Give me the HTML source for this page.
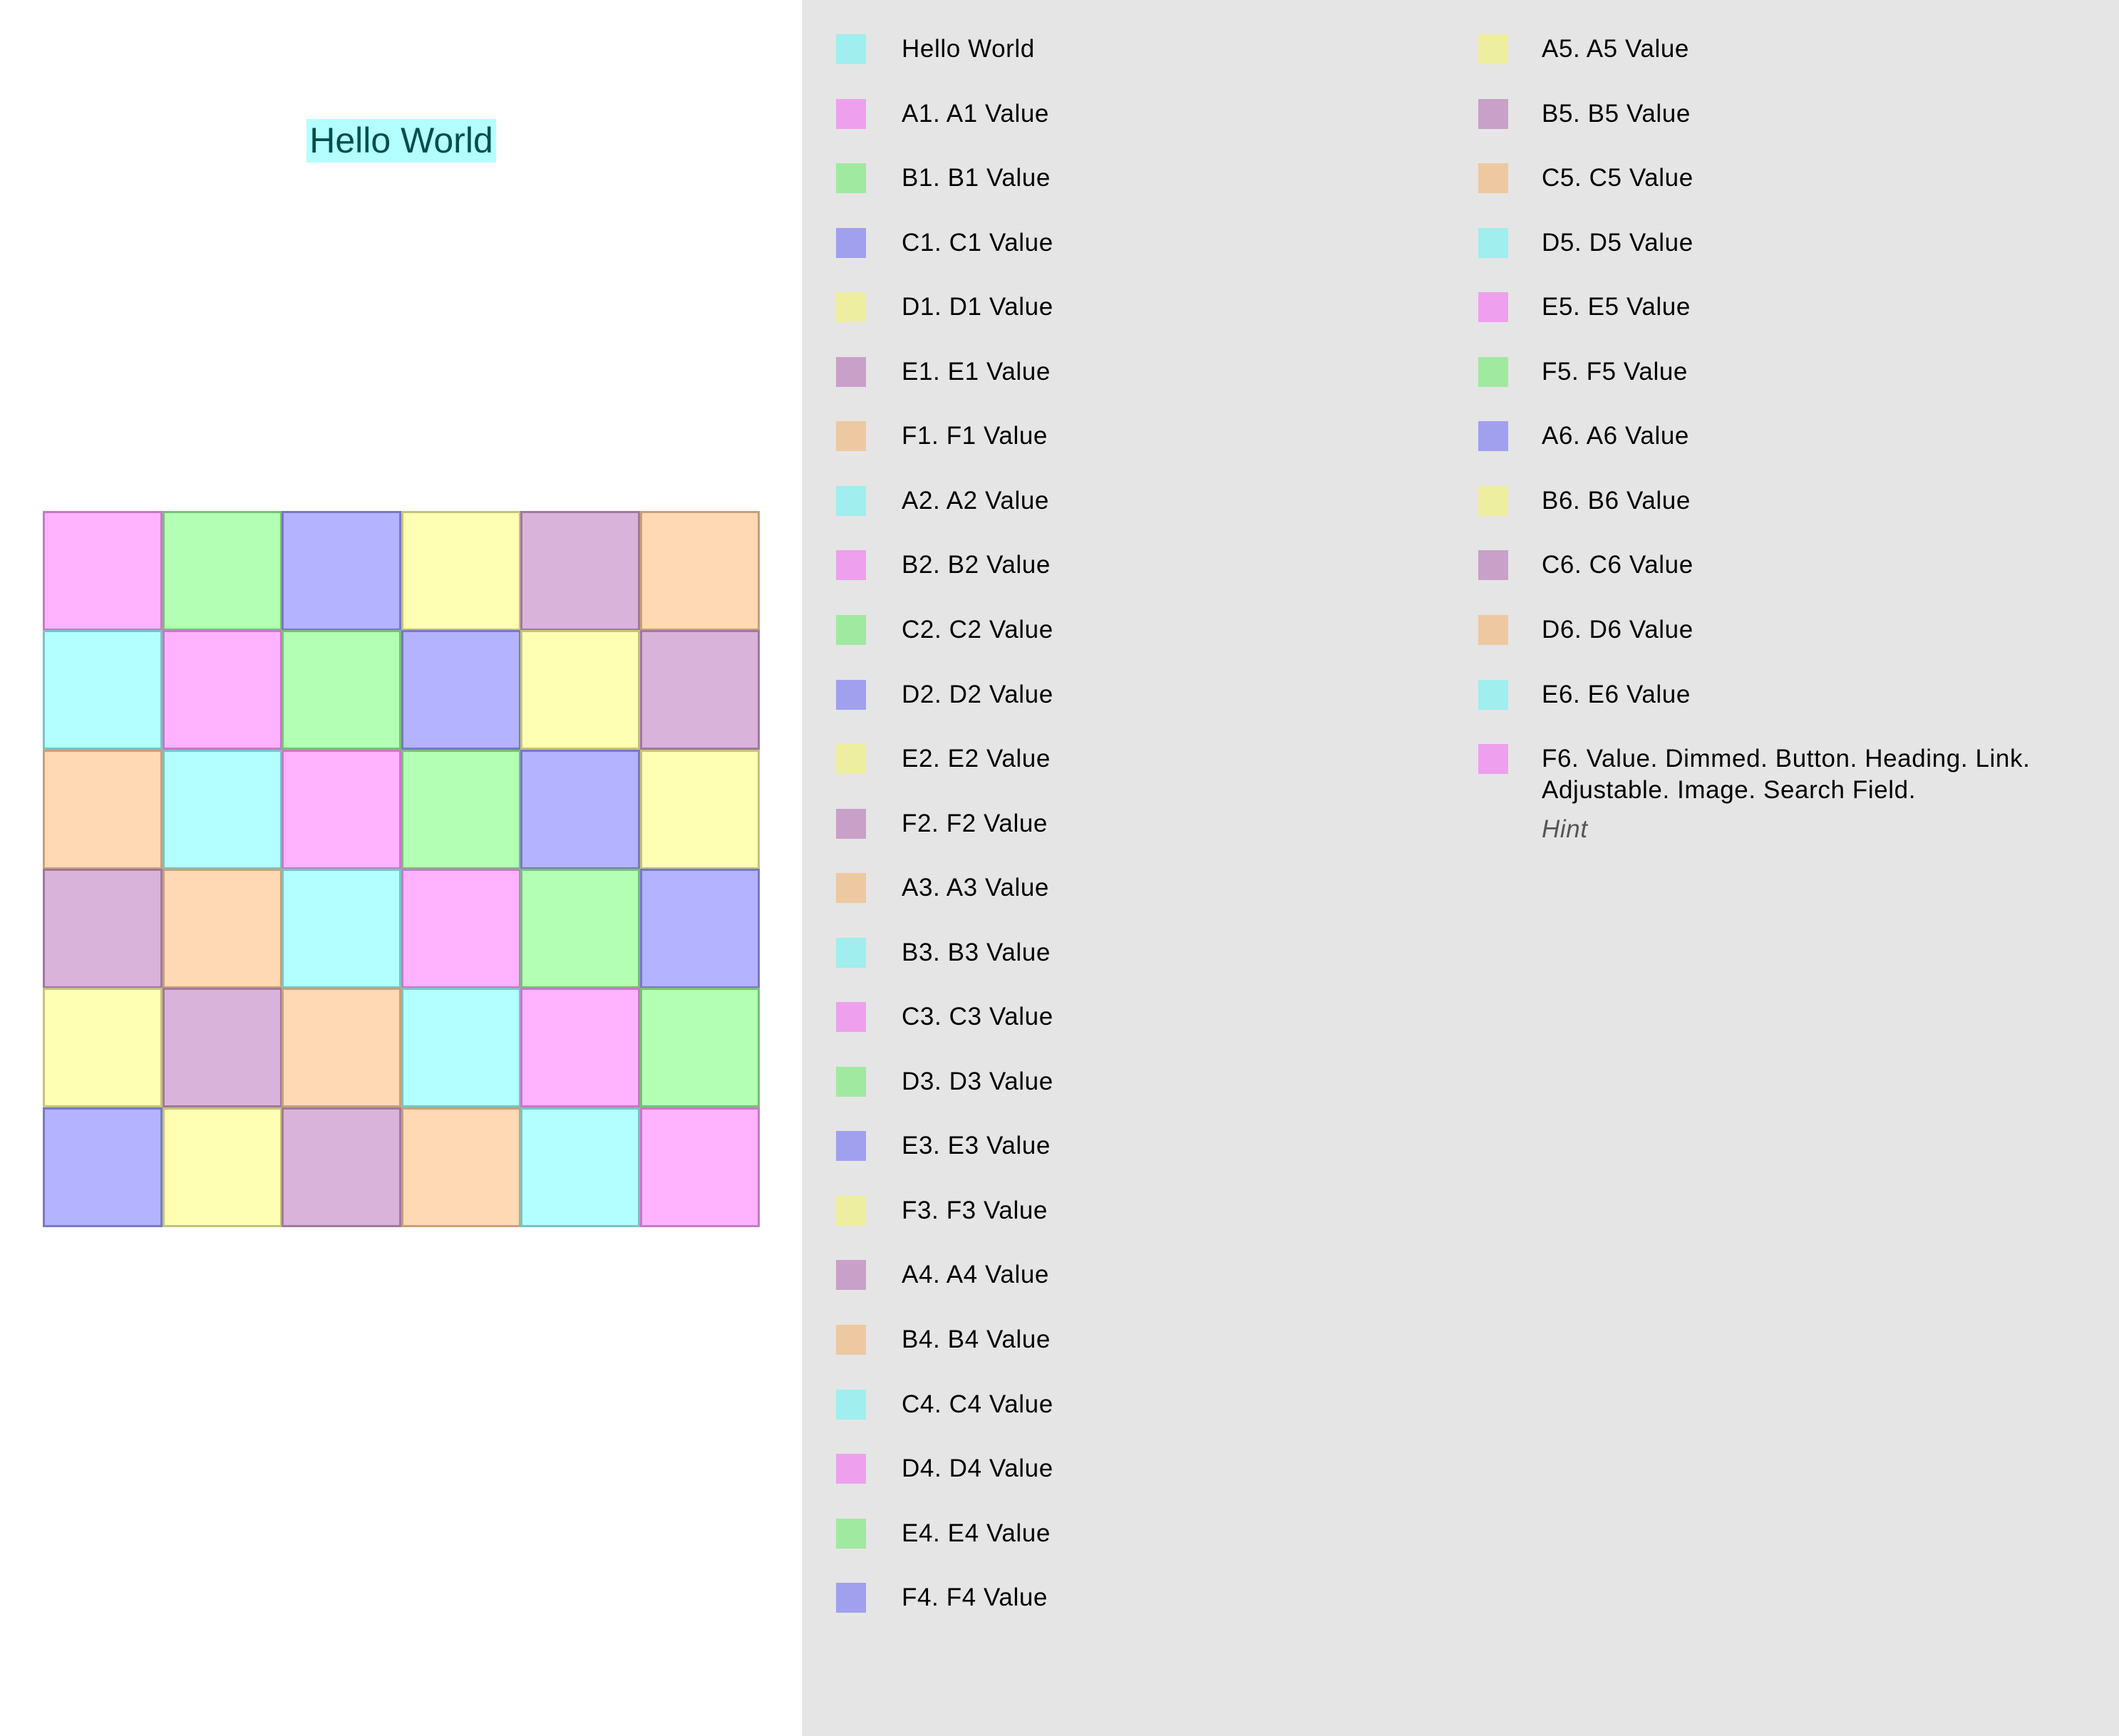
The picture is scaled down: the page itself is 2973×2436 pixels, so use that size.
<!DOCTYPE html>
<html><head><meta charset="utf-8"><style>
html,body{margin:0;padding:0;}
body{width:2973px;height:2436px;position:relative;background:#fff;overflow:hidden;font-family:"Liberation Sans",sans-serif;}
#hw{position:absolute;left:430px;top:167px;width:266px;height:61px;background:#b3ffff;color:#004d4d;font-size:50px;line-height:61px;text-align:center;white-space:nowrap;}
.c{position:absolute;box-sizing:border-box;border:3px solid;width:168px;height:168px;}
#panel{position:absolute;left:1125px;top:0;width:1848px;height:2436px;background:#e5e5e5;}
.sw{position:absolute;width:42px;height:42px;}
.t{position:absolute;font-size:35px;line-height:42px;color:#000;white-space:nowrap;letter-spacing:0.6px;}
</style></head><body>
<div id="hw">Hello World</div>
<div id="grid"></div>
<div id="panel"></div>
<div id="leg"></div>
<script>
(function(){
var fill=['#b3ffff','#ffb3ff','#b3ffb3','#b3b3ff','#ffffb3','#d9b3d9','#ffd9b3'];
var brd=['#78c4c4','#c878c8','#78c078','#7878c8','#c4c478','#a078a0','#c8a078'];
var sw=['#a0eeee','#eea0ee','#a0e9a0','#a0a0ee','#eeeea0','#c8a0c8','#eec8a0'];
var h='';
for(var r=0;r<6;r++)for(var c=0;c<6;c++){var i=((c+1-r)%7+7)%7;
h+='<div class="c" style="left:'+(60+c*167.5)+'px;top:'+(717+r*167.3)+'px;background:'+fill[i]+';border-color:'+brd[i]+'"></div>';}
document.getElementById('grid').innerHTML=h;
var items=['Hello World'];var L='ABCDEF';
for(var n=1;n<=6;n++)for(var k=0;k<6;k++){if(n==6&&k==5)break;items.push(L[k]+n+'. '+L[k]+n+' Value');}
var s='';
for(var j=0;j<items.length;j++){var col=j<25?0:1;var idx=col?j-25:j;var y=48+idx*90.55;
var sx=col?2074:1173, tx=col?2163:1265;
s+='<div class="sw" style="left:'+sx+'px;top:'+y+'px;background:'+sw[j%7]+'"></div>';
s+='<div class="t" style="left:'+tx+'px;top:'+y+'px">'+items[j]+'</div>';}
var y2=48+11*90.55;
s+='<div class="sw" style="left:2074px;top:'+y2+'px;background:'+sw[36%7]+'"></div>';
s+='<div class="t" style="left:2163px;top:'+(y2-1)+'px;line-height:44px">F6. Value. Dimmed. Button. Heading. Link.<br>Adjustable. Image. Search Field.</div>';
s+='<div class="t" style="left:2163px;top:'+(y2+99)+'px;color:#555;font-style:italic">Hint</div>';
document.getElementById('leg').innerHTML=s;
})();
</script>
</body></html>
